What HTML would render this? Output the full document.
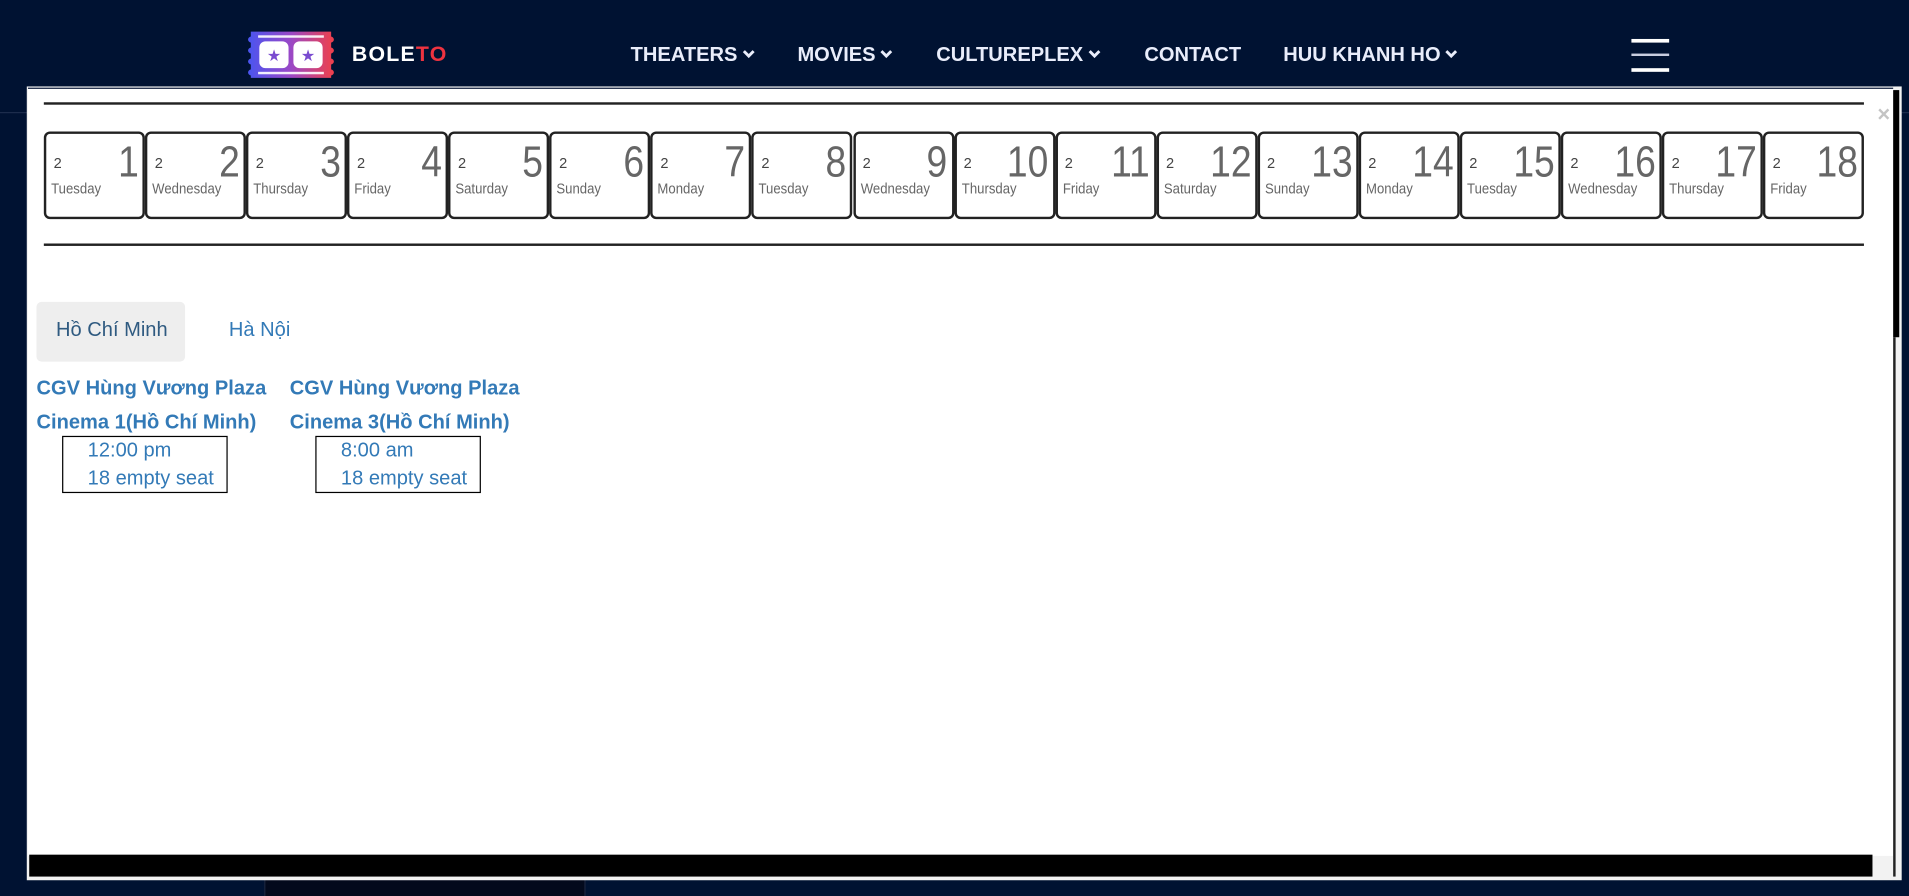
<!DOCTYPE html>
<html><head><meta charset="utf-8"><style>
html,body{margin:0;padding:0;width:1909px;height:896px;overflow:hidden;background:#001232;}
#w{position:absolute;left:0;top:0;width:1568px;height:736px;transform:scale(1.21747);transform-origin:0 0;font-family:"Liberation Sans",Arial,sans-serif;}
.abs{position:absolute;}
.nav{position:absolute;top:36px;color:#e9edfb;font-weight:bold;font-size:16.5px;letter-spacing:0;white-space:nowrap}
.nav svg{vertical-align:middle;margin-left:4px;margin-top:-3px}
.card{position:absolute;top:108px;width:79px;height:68px;border:2px solid #222;border-radius:5px;background:#fff;box-sizing:content-box}
.card .s{position:absolute;left:6px;top:17px;font-size:12px;color:#444}
.card .n{position:absolute;right:3px;top:2px;font-size:36px;color:#666;line-height:42px;transform:scaleX(0.85);transform-origin:100% 50%}
.card .d{position:absolute;left:4px;top:38px;font-size:12px;color:#666;transform:scaleX(0.9);transform-origin:0 50%;white-space:nowrap}
.th{position:absolute;color:#337ab7;font-weight:bold;font-size:16.5px;line-height:28px;white-space:nowrap}
.st{position:absolute;border:1px solid #000;width:133px;height:47px;box-sizing:border-box;color:#337ab7;font-size:16.5px;line-height:23px;padding-left:20px}
</style></head><body><div id="w">
<svg class="abs" style="left:200px;top:25px" width="78" height="40" viewBox="0 0 78 40">
<defs><linearGradient id="g" x1="0" x2="1"><stop offset="0" stop-color="#4a55f0"/><stop offset="0.5" stop-color="#9a48c6"/><stop offset="1" stop-color="#f0404a"/></linearGradient></defs>
<path d="M6 1H72V5C75 6 75 9 72 10V14C75 15 75 18 72 19V23C75 24 75 27 72 28V32C75 33 75 36 72 37V39H6V37C3 36 3 33 6 32V28C3 27 3 24 6 23V19C3 18 3 15 6 14V10C3 9 3 6 6 5Z" fill="url(#g)"/>
<g fill="#fff"><rect x="12" y="4" width="54" height="2" opacity=".9"/><rect x="12" y="34" width="54" height="2" opacity=".9"/>
<rect x="13" y="9" width="24" height="22" rx="5"/><rect x="41" y="9" width="24" height="22" rx="5"/></g>
<text x="25" y="25" font-size="13" text-anchor="middle" fill="#7a4bd0">★</text><text x="53" y="25" font-size="13" text-anchor="middle" fill="#7a4bd0">★</text>
</svg>
<div class="abs" style="left:289px;top:34px;font-weight:bold;font-size:17.5px;color:#fff;letter-spacing:1px">BOLE<span style="color:#ee3340">TO</span></div>
<div class="nav" style="left:518px">THEATERS<svg width="10" height="8" viewBox="0 0 10 8"><path d="M1 2L5 6L9 2" stroke="#e9edfb" stroke-width="2.4" fill="none"/></svg></div>
<div class="nav" style="left:655px">MOVIES<svg width="10" height="8" viewBox="0 0 10 8"><path d="M1 2L5 6L9 2" stroke="#e9edfb" stroke-width="2.4" fill="none"/></svg></div>
<div class="nav" style="left:769px">CULTUREPLEX<svg width="10" height="8" viewBox="0 0 10 8"><path d="M1 2L5 6L9 2" stroke="#e9edfb" stroke-width="2.4" fill="none"/></svg></div>
<div class="nav" style="left:940px">CONTACT</div>
<div class="nav" style="left:1054px">HUU KHANH HO<svg width="10" height="8" viewBox="0 0 10 8"><path d="M1 2L5 6L9 2" stroke="#e9edfb" stroke-width="2.4" fill="none"/></svg></div>
<div class="abs" style="left:1340px;top:32px;width:31px;height:3px;background:#fff"></div>
<div class="abs" style="left:1340px;top:44px;width:31px;height:2px;background:#c8cde0"></div>
<div class="abs" style="left:1340px;top:56px;width:31px;height:3px;background:#fff"></div>
<div class="abs" style="left:0;top:92px;width:1568px;height:1px;background:#1d2c4d"></div>
<div class="abs" style="left:217px;top:700px;width:262px;height:36px;background:#03091c;border-left:1px solid #1a2640;border-right:1px solid #1a2640"></div>
<div class="abs" style="left:22px;top:71px;width:1540px;height:652px;background:#f2f2f2"></div>
<div class="abs" style="left:23px;top:72px;width:1532px;height:630px;background:#fff;border-top:1px solid #0b1a3a"></div>
<div class="abs" style="left:24px;top:702px;width:1514px;height:18px;background:#000"></div>
<div class="abs" style="left:1555px;top:74px;width:5px;height:203px;background:#000"></div>
<div class="abs" style="left:1555px;top:277px;width:2px;height:443px;background:#222"></div>
<div class="abs" style="left:36px;top:84px;width:1495px;height:2px;background:#222"></div>
<div class="abs" style="left:36px;top:200px;width:1495px;height:2px;background:#222"></div>
<div class="abs" style="left:1542px;top:84px;font-size:18px;font-weight:bold;color:#c4c4c4">×</div>
<div id="cards"></div>
<div class="abs" style="left:30px;top:248px;width:122px;height:49px;background:#eee;border-radius:4px"></div>
<div class="abs" style="left:46px;top:262px;font-size:16.5px;color:#2f5a80">Hồ Chí Minh</div>
<div class="abs" style="left:188px;top:262px;font-size:16.5px;color:#337ab7">Hà Nội</div>
<div class="th" style="left:30px;top:305px">CGV Hùng Vương Plaza<br>Cinema 1(Hồ Chí Minh)</div>
<div class="th" style="left:238px;top:305px">CGV Hùng Vương Plaza<br>Cinema 3(Hồ Chí Minh)</div>
<div class="st" style="left:51px;top:358px;width:136px">12:00 pm<br>18 empty seat</div>
<div class="st" style="left:259px;top:358px;width:136px">8:00 am<br>18 empty seat</div>
<script>
var days=["Tuesday","Wednesday","Thursday","Friday","Saturday","Sunday","Monday"];
var h="";
for(var i=0;i<18;i++){var x=36+i*83.06;
h+='<div class="card" style="left:'+x.toFixed(1)+'px"><span class="s">2</span><span class="n">'+(i+1)+'</span><span class="d">'+days[i%7]+'</span></div>';}
document.getElementById("cards").innerHTML=h;
</script>
</div></body></html>
